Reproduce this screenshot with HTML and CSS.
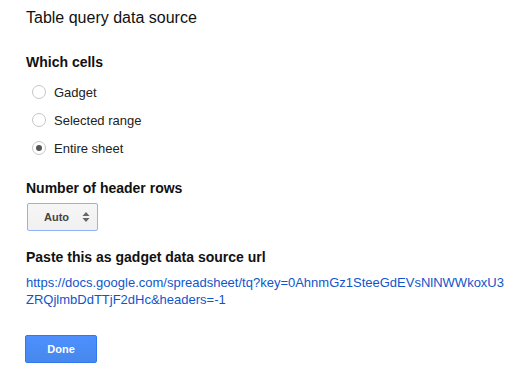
FILE: index.html
```html
<!DOCTYPE html>
<html>
<head>
<meta charset="utf-8">
<link rel="stylesheet" href="styles.css">
</head>
<body>
<div class="dialog">
  <div class="title">Table query data source</div>
  <div class="heading">Which cells</div>
  <div class="options">
    <label class="option"><span class="radio"></span><span>Gadget</span></label>
    <label class="option"><span class="radio"></span><span>Selected range</span></label>
    <label class="option"><span class="radio checked"></span><span>Entire sheet</span></label>
  </div>
  <div class="heading heading-gap">Number of header rows</div>
  <div class="select">
    <span class="select-value">Auto</span>
    <svg class="select-arrows" width="8" height="12" viewBox="0 0 8 12"><path d="M4 1 L7.5 5 L0.5 5 Z M4 11 L7.5 7 L0.5 7 Z" fill="#666"/></svg>
  </div>
  <div class="heading heading-gap">Paste this as gadget data source url</div>
  <div class="url">https://docs.google.com/spreadsheet/tq?key=0AhnmGz1SteeGdEVsNlNWWkoxU3<wbr>ZRQjlmbDdTTjF2dHc&amp;headers=-1</div>
  <div class="actions"><button class="btn-primary">Done</button></div>
</div>
</body>
</html>
```
FILE: styles.css
```css
html, body {
  margin: 0;
  background: #fff;
}
body {
  font-family: "Liberation Sans", Arial, sans-serif;
  color: #222;
}
.dialog {
  padding: 8px 8px 0 26px;
}
.title {
  font-size: 16px;
  line-height: 20px;
  color: #111;
}
.heading {
  margin-top: 26px;
  font-size: 14px;
  line-height: 16px;
  font-weight: bold;
  color: #111;
}
.heading-gap {
  margin-top: 18px;
}
.options {
  margin-top: 8px;
  display: flex;
  flex-direction: column;
}
.option {
  display: flex;
  align-items: center;
  height: 28px;
  font-size: 13px;
  color: #222;
}
.radio {
  box-sizing: border-box;
  width: 14px;
  height: 14px;
  margin-left: 6px;
  margin-right: 8px;
  border: 1px solid #c6c6c6;
  border-radius: 50%;
  background: #fff;
  display: flex;
  align-items: center;
  justify-content: center;
}
.radio.checked::after {
  content: "";
  width: 6px;
  height: 6px;
  border-radius: 50%;
  background: #555;
}
.select {
  box-sizing: border-box;
  margin-top: 7px;
  margin-left: 1px;
  width: 71px;
  height: 28px;
  border: 1px solid #8fb4f5;
  border-radius: 2px;
  background: linear-gradient(#f6f6f6, #f0f0f0);
  display: flex;
  align-items: center;
  padding-left: 16px;
  padding-right: 7px;
  font-size: 11px;
  font-weight: bold;
  color: #444;
}
.select-value {
  flex: 1;
}
.select-arrows {
  display: block;
}
.url {
  margin-top: 9px;
  font-size: 13px;
  line-height: 17px;
  color: #1155cc;
}
.actions {
  margin-top: 27px;
}
.btn-primary {
  box-sizing: border-box;
  width: 72px;
  height: 28px;
  margin: 0 0 0 -1px;
  padding: 0;
  border: 1px solid #3079ed;
  border-radius: 2px;
  background: linear-gradient(#4d90fe, #4787ed);
  color: #fff;
  font-family: "Liberation Sans", Arial, sans-serif;
  font-size: 11px;
  font-weight: bold;
}
```
